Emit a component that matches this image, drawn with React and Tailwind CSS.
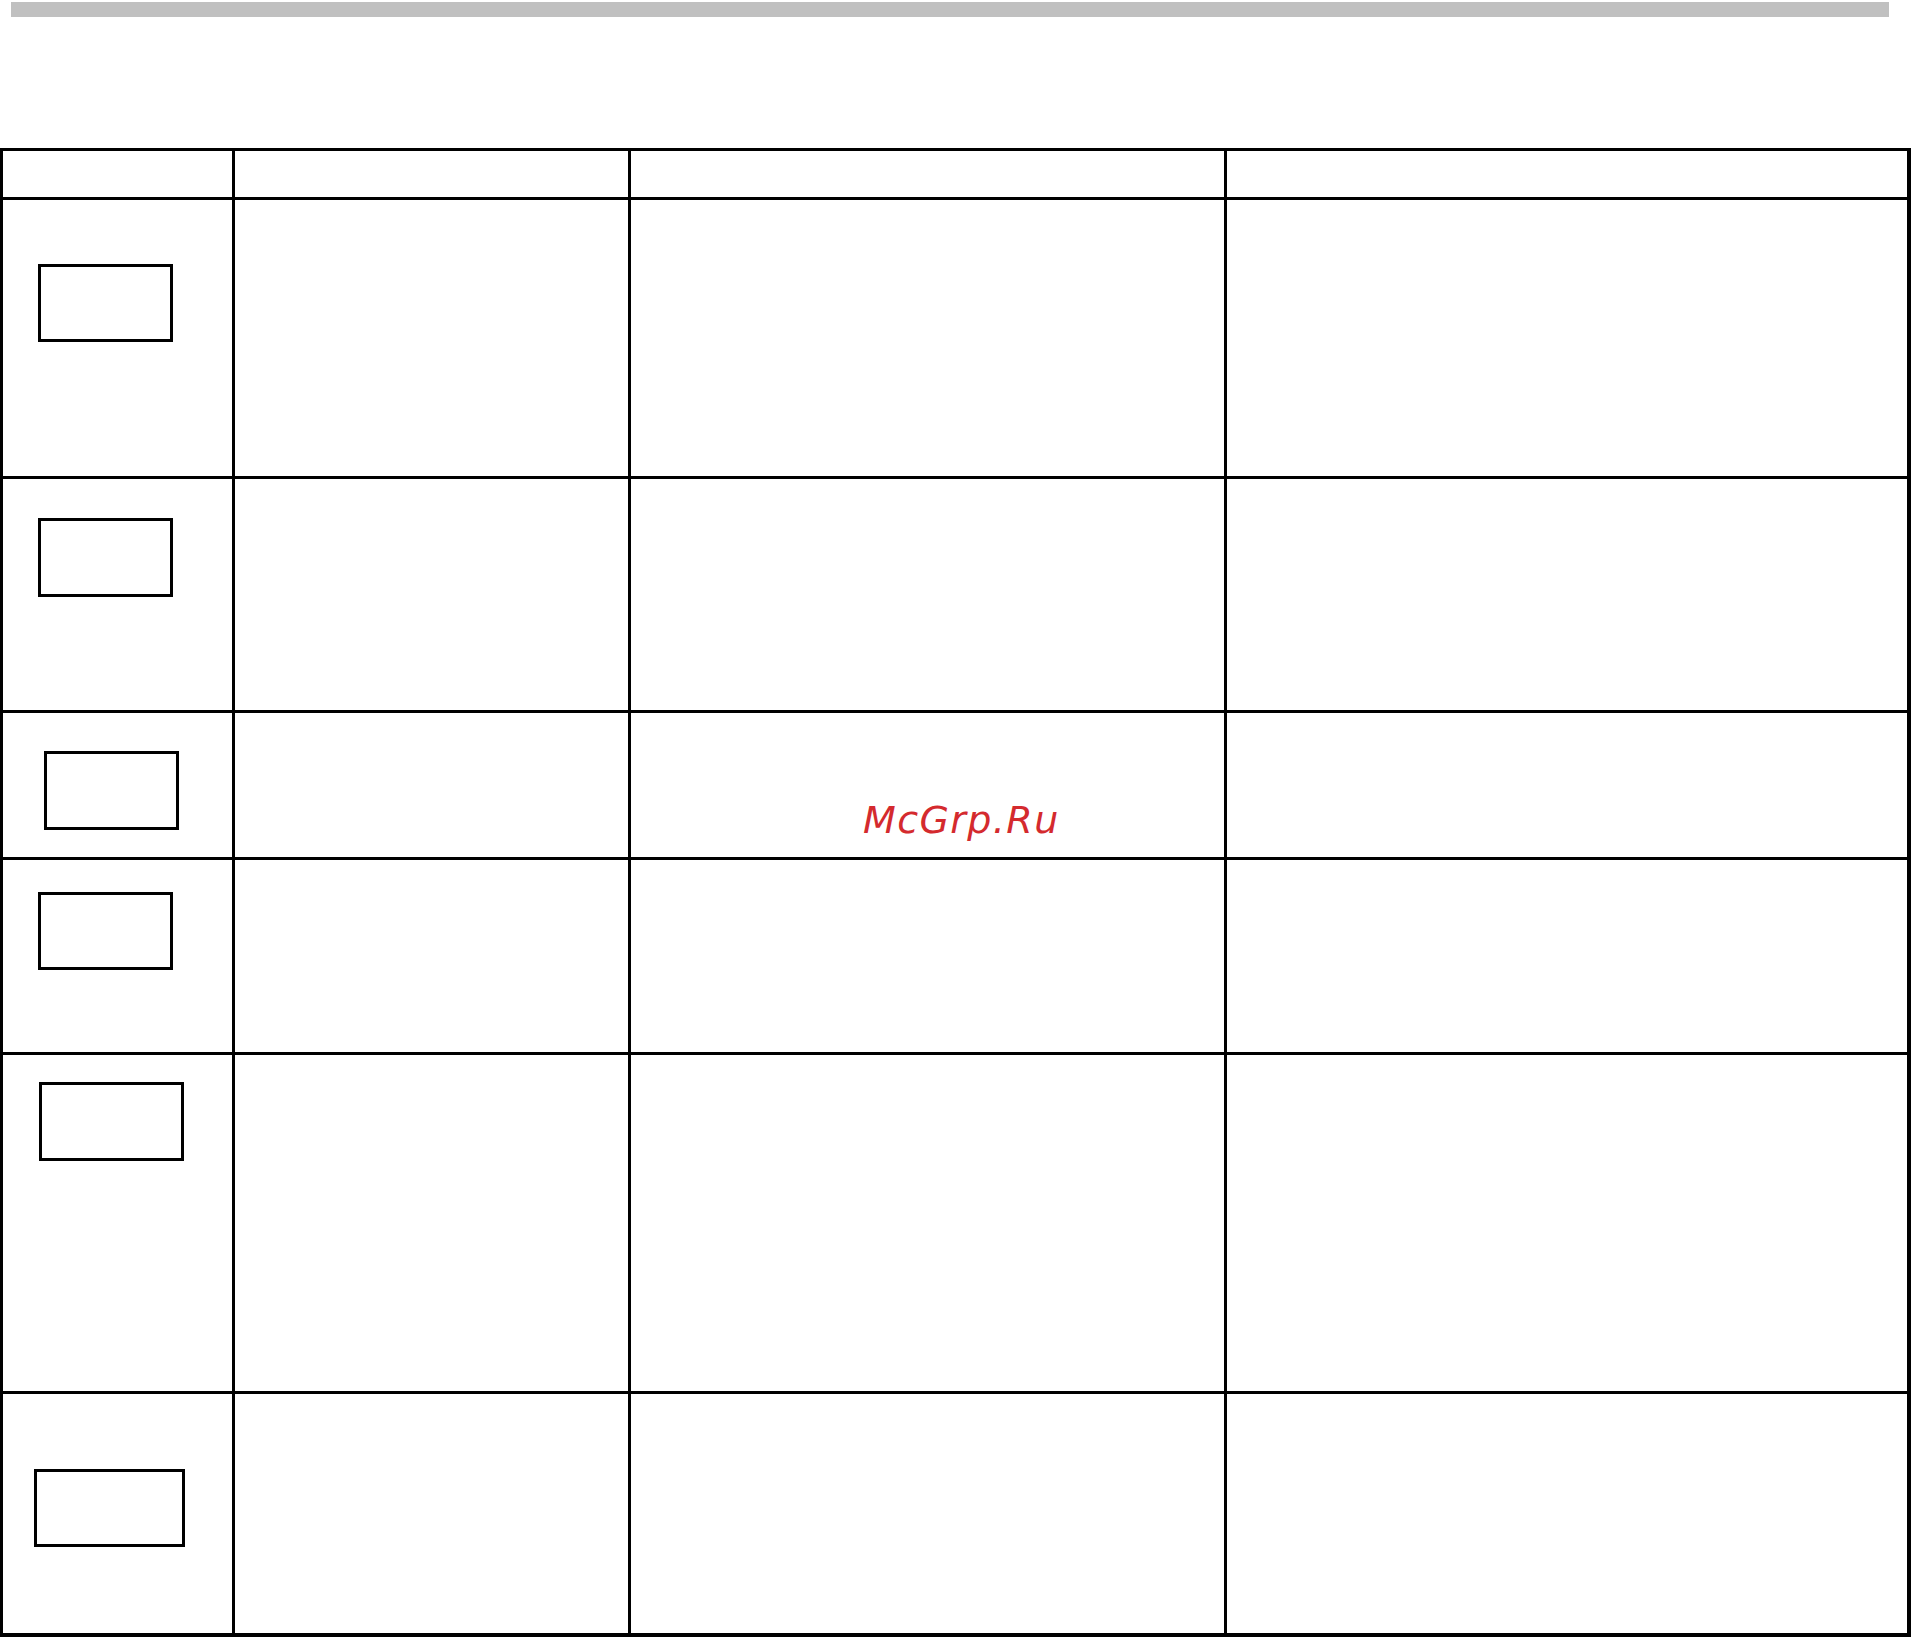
import React from 'react';

const ROWS = [
  { h: 'h-[276px]', box: 'ml-[35px] mt-[64px] w-[135px] h-[78px]' },
  { h: 'h-[231px]', box: 'ml-[35px] mt-[39px] w-[135px] h-[79px]' },
  { h: 'h-[144px]', box: 'ml-[41px] mt-[38px] w-[135px] h-[79px]' },
  { h: 'h-[192px]', box: 'ml-[35px] mt-[32px] w-[135px] h-[78px]' },
  { h: 'h-[336px]', box: 'ml-[36px] mt-[27px] w-[145px] h-[79px]' },
  { h: 'h-[239px]', box: 'ml-[31px] mt-[75px] w-[151px] h-[78px]' },
];

export default function App() {
  return (
    <div className="relative w-[1911px] h-[1637px] bg-white overflow-hidden font-['DejaVu_Sans',sans-serif]">
      {/* top rule */}
      <div className="ml-[11px] mt-[2px] w-[1878px] h-[15px] bg-[#c0c0c0]" />

      {/* table */}
      <div className="mt-[131px] pt-[3px] pl-[3px] pr-[4px] pb-[4px] bg-black">
        <div className="grid grid-cols-[229px_393px_593px_1fr] gap-[3px]">
          <div className="h-[46px] bg-white" />
          <div className="h-[46px] bg-white" />
          <div className="h-[46px] bg-white" />
          <div className="h-[46px] bg-white" />
          {ROWS.map((row, i) => (
            <React.Fragment key={i}>
              <div className={`${row.h} bg-white`}>
                <div className={`${row.box} border-[3px] border-black`} />
              </div>
              <div className={`${row.h} bg-white`} />
              <div className={`${row.h} bg-white`} />
              <div className={`${row.h} bg-white`} />
            </React.Fragment>
          ))}
        </div>
      </div>

      {/* watermark */}
      <div className="absolute left-[863px] top-[801px] text-[38px] leading-none italic tracking-[1.4px] text-[#d42a2e]">
        McGrp.Ru
      </div>
    </div>
  );
}
